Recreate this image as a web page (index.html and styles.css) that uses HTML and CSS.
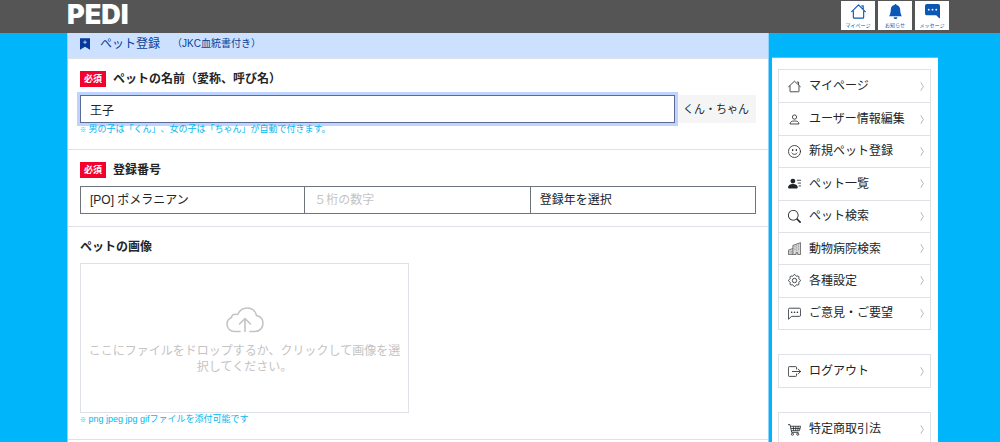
FILE: index.html
```html
<!DOCTYPE html>
<html lang="ja">
<head>
<meta charset="utf-8">
<meta name="viewport" content="width=device-width, initial-scale=1">
<title>PEDI ペット登録</title>
<link rel="stylesheet" href="styles.css">
</head>
<body>
<header class="topbar">
  <a class="logo" href="#">PEDI</a>
  <nav class="shortcuts">
    <a class="shortcut" href="#"><svg class="shortcut-icon" viewBox="0 0 16 16"><path d="M2.500 7.500V14a1 1 0 0 0 1 1h9a1 1 0 0 0 1-1V7.500M.8 8.200 8 1l7.200 7.200M11.500 2h1.500V5.500" fill="none" stroke="currentColor" stroke-width="1.200" stroke-linecap="round" stroke-linejoin="round"/></svg><span>マイページ</span></a>
    <a class="shortcut" href="#"><svg class="shortcut-icon" viewBox="0 0 16 16"><path d="M8 16a2 2 0 0 0 2-2H6a2 2 0 0 0 2 2zm.995-14.901a1 1 0 1 0-1.990 0A5.002 5.002 0 0 0 3 6c0 1.098-.5 6-2 7h14c-1.500-1-2-5.902-2-7 0-2.420-1.720-4.440-4.005-4.901z"/></svg><span>お知らせ</span></a>
    <a class="shortcut" href="#"><svg class="shortcut-icon" viewBox="0 0 16 16"><path d="M16 2a2 2 0 0 0-2-2H2a2 2 0 0 0-2 2v8a2 2 0 0 0 2 2h9.586a1 1 0 0 1 .707.293l2.853 2.853a.5.5 0 0 0 .854-.353V2zM5 6a1 1 0 1 1-2 0 1 1 0 0 1 2 0zm4 0a1 1 0 1 1-2 0 1 1 0 0 1 2 0zm3 1a1 1 0 1 1 0-2 1 1 0 0 1 0 2z"/></svg><span>メッセージ</span></a>
  </nav>
</header>

<div class="page">
  <main class="content">
    <h1 class="page-title">
      <svg class="title-icon" viewBox="0 0 14 16"><path d="M0 0h14v16l-7-4-7 4z"/><path d="M7 3v5M4.500 5.500h5" stroke="#cce0ff" stroke-width="1.200"/></svg>
      <span>ペット登録</span>
      <small class="title-note">（JKC血統書付き）</small>
    </h1>
    <form>
      <section class="field">
        <div class="field-head"><span class="badge">必須</span><label class="field-label" for="pet-name">ペットの名前（愛称、呼び名）</label></div>
        <div class="name-row">
          <input class="control focused" id="pet-name" type="text" value="王子">
          <span class="addon">くん・ちゃん</span>
        </div>
        <p class="hint"><span class="mark">※</span> 男の子は「くん」、女の子は「ちゃん」が自動で付きます。</p>
      </section>

      <section class="field">
        <div class="field-head"><span class="badge">必須</span><label class="field-label" for="reg-number">登録番号</label></div>
        <div class="number-row">
          <select class="control" aria-label="犬種"><option>[PO] ポメラニアン</option></select>
          <input class="control" id="reg-number" type="text" placeholder="５桁の数字">
          <select class="control" aria-label="登録年"><option>登録年を選択</option></select>
        </div>
      </section>

      <section class="field">
        <div class="field-head"><label class="field-label" for="pet-image">ペットの画像</label></div>
        <label class="dropzone">
          <input class="file-input" id="pet-image" type="file" accept=".png,.jpeg,.jpg,.gif">
          <svg class="cloud" viewBox="0 0 38 26" fill="none" stroke="currentColor" stroke-width="1.600" stroke-linecap="round" stroke-linejoin="round"><path d="M14 24.500H8.500C4.500 24.500 1 21.500 1 17.300 1 13.800 3 11.500 5.500 10.500 5.500 8 8 6.600 11.500 7.500 13.500 3.500 17 1 21 1c5 0 8.500 3.200 9.500 7.500 4 .8 6.500 4 6.500 8 0 4.500-3.500 8-8 8h-5M19 24.500v-13M13.500 17 19 11.500l5.500 5.500"/></svg>
          <span>ここにファイルをドロップするか、クリックして画像を選択してください。</span>
        </label>
        <p class="hint"><span class="mark">※</span> png jpeg jpg gifファイルを添付可能です</p>
      </section>
    </form>
  </main>

  <aside class="sidebar">
    <nav class="menu menu-main">
      <a class="menu-item" href="#"><svg class="menu-icon" viewBox="0 0 16 16"><path d="M2.500 7.500V14a.5.5 0 0 0 .5.5h10a.5.5 0 0 0 .5-.5V7.500M.8 8.200 8 1.500l7.200 6.700M11.500 2.500h1.500V5.500" fill="none" stroke="currentColor" stroke-linecap="round" stroke-linejoin="round"/></svg><span>マイページ</span><svg class="chevron" viewBox="0 0 6 12"><path d="M1 1l3 5-3 5"/></svg></a>
      <a class="menu-item" href="#"><svg class="menu-icon" viewBox="0 0 16 16"><g fill="none" stroke="currentColor"><circle cx="8" cy="5" r="2.600"/><path d="M2.500 13.500c0-2.500 2-3.700 5.500-3.700s5.500 1.200 5.500 3.700z" stroke-linejoin="round"/></g></svg><span>ユーザー情報編集</span><svg class="chevron" viewBox="0 0 6 12"><path d="M1 1l3 5-3 5"/></svg></a>
      <a class="menu-item" href="#"><svg class="menu-icon" viewBox="0 0 16 16"><g fill="none" stroke="currentColor" stroke-linecap="round"><circle cx="8" cy="8" r="7.400"/><path d="M4.700 10a3.900 3.900 0 0 0 6.600 0"/></g><ellipse cx="5.800" cy="6.300" rx=".9" ry="1.300"/><ellipse cx="10.200" cy="6.300" rx=".9" ry="1.300"/></svg><span>新規ペット登録</span><svg class="chevron" viewBox="0 0 6 12"><path d="M1 1l3 5-3 5"/></svg></a>
      <a class="menu-item" href="#"><svg class="menu-icon" viewBox="0 0 16 16"><circle cx="6" cy="5" r="3"/><path d="M0 13c0-2.500 2-4.500 6-4.500s6 2 6 4.500c0 .7-.4 1-1 1H1c-.6 0-1-.3-1-1z"/><path d="M11 4h5M12 7.500h4M13 11h3" stroke="currentColor"/></svg><span>ペット一覧</span><svg class="chevron" viewBox="0 0 6 12"><path d="M1 1l3 5-3 5"/></svg></a>
      <a class="menu-item" href="#"><svg class="menu-icon" viewBox="0 0 16 16"><path d="M11.742 10.344a6.500 6.500 0 1 0-1.397 1.398l3.850 3.850a1 1 0 0 0 1.415-1.414l-3.868-3.834zM12 6.500a5.500 5.500 0 1 1-11 0 5.500 5.500 0 0 1 11 0z"/></svg><span>ペット検索</span><svg class="chevron" viewBox="0 0 6 12"><path d="M1 1l3 5-3 5"/></svg></a>
      <a class="menu-item" href="#"><svg class="menu-icon" viewBox="0 0 16 16"><path d="M.5 15.500V10l5.500-2V4.200L15.500.8v14.700h-3.500V13h-2v2.500zM6 8v7.500" fill="#ddd" stroke="#555" stroke-linejoin="round"/><path d="M2.500 11v3M4.200 11v3M8.500 5v6M10.700 4v7M13 3v8" stroke="#777" stroke-dasharray="1 1"/></svg><span>動物病院検索</span><svg class="chevron" viewBox="0 0 6 12"><path d="M1 1l3 5-3 5"/></svg></a>
      <a class="menu-item" href="#"><svg class="menu-icon" viewBox="0 0 16 16"><g fill="none" stroke="currentColor" stroke-linejoin="round"><circle cx="8" cy="8" r="2.700"/><path d="M6.600 1.800c.4-1.500 2.400-1.500 2.800 0 .3.900 1.100 1.200 1.900.8 1.400-.7 2.800.7 2.100 2.100-.4.800-.1 1.600.8 1.900 1.500.4 1.500 2.400 0 2.800-.9.300-1.200 1.100-.8 1.900.7 1.400-.7 2.800-2.100 2.100-.8-.4-1.600-.1-1.900.8-.4 1.500-2.400 1.500-2.800 0-.3-.9-1.100-1.200-1.900-.8-1.400.7-2.800-.7-2.100-2.100.4-.8.100-1.600-.8-1.900-1.500-.4-1.500-2.400 0-2.800.9-.3 1.200-1.100.8-1.900-.7-1.400.7-2.800 2.100-2.100.8.400 1.600.1 1.900-.8z"/></g></svg><span>各種設定</span><svg class="chevron" viewBox="0 0 6 12"><path d="M1 1l3 5-3 5"/></svg></a>
      <a class="menu-item" href="#"><svg class="menu-icon" viewBox="0 0 16 16"><path d="M2 1.500h12A1.500 1.500 0 0 1 15.500 3v7a1.500 1.500 0 0 1-1.500 1.500H4.500l-4 3.500V3A1.500 1.500 0 0 1 2 1.500z" fill="none" stroke="currentColor" stroke-linejoin="round"/><circle cx="4.500" cy="6.500" r="1"/><circle cx="8" cy="6.500" r="1"/><circle cx="11.500" cy="6.500" r="1"/></svg><span>ご意見・ご要望</span><svg class="chevron" viewBox="0 0 6 12"><path d="M1 1l3 5-3 5"/></svg></a>
    </nav>
    <nav class="menu">
      <a class="menu-item" href="#"><svg class="menu-icon" viewBox="0 0 16 16"><path d="M10.500 5V3A1 1 0 0 0 9.500 2h-8a1 1 0 0 0-1 1v10a1 1 0 0 0 1 1h8a1 1 0 0 0 1-1v-2M5.500 8h10M12.500 5l3 3-3 3" fill="none" stroke="currentColor" stroke-linecap="round" stroke-linejoin="round"/></svg><span>ログアウト</span><svg class="chevron" viewBox="0 0 6 12"><path d="M1 1l3 5-3 5"/></svg></a>
    </nav>
    <nav class="menu">
      <a class="menu-item" href="#"><svg class="menu-icon" viewBox="0 0 16 16"><g fill="none" stroke="currentColor" stroke-linejoin="round"><path d="M0 2h2.500l2 9.500H13M3 4h12.500L14 9.500H4M6.500 4l.5 5.500M9.500 4v5.500M12.500 4 12 9.500M3.500 6.700h11.500"/><circle cx="5.500" cy="13.800" r="1.300"/><circle cx="12" cy="13.800" r="1.300"/></g></svg><span>特定商取引法</span><svg class="chevron" viewBox="0 0 6 12"><path d="M1 1l3 5-3 5"/></svg></a>
    </nav>
  </aside>
</div>
</body>
</html>
```

FILE: styles.css
```css
* {
  box-sizing: border-box;
}

html {
  scrollbar-width: none;
}

body {
  display: flex;
  flex-direction: column;
  min-height: 100vh;
  margin: 0;
  background: #00b5fa;
  color: #212529;
  font-family: "Liberation Sans", "Noto Sans CJK JP", sans-serif;
  font-size: 12px;
  line-height: 16px;
  text-spacing-trim: space-all;
}

.topbar {
  display: flex;
  flex: none;
  justify-content: space-between;
  align-items: flex-start;
  height: 33px;
  padding: 0 51px 0 67px;
  background: #555;
}

.logo {
  color: #fff;
  font-family: Inter, sans-serif;
  font-size: 27px;
  font-weight: 900;
  line-height: 30px;
  text-decoration: none;
}

.shortcuts {
  display: flex;
  gap: 3px;
  padding-top: 1px;
}

.shortcut {
  display: flex;
  flex-direction: column;
  align-items: center;
  gap: 2px;
  width: 34px;
  height: 29px;
  padding-top: 3px;
  background: #fff;
  color: #0b57b5;
  font-size: 5px;
  line-height: 8px;
  text-decoration: none;
  white-space: nowrap;
}

.shortcut-icon {
  width: 15px;
  height: 15px;
  fill: currentColor;
}

.page {
  display: flex;
  flex: 1;
  gap: 3px;
  padding: 0 62px 0 67px;
}

.content {
  flex: 1;
  min-width: 0;
  background: #fff;
  border: solid #8fd3fb;
  border-width: 0 1px;
}

.page-title {
  display: flex;
  align-items: center;
  height: 26px;
  margin: 0;
  padding: 0 12px 4px;
  background: #cce0ff;
  border-bottom: 1px solid #dee2e6;
  color: #084298;
  font-size: 12px;
  font-weight: 400;
}

.title-icon {
  width: 10px;
  height: 12px;
  margin-right: 10px;
  fill: #083a9c;
}

.title-note {
  margin-left: 12px;
  font-size: 10px;
}

.field {
  padding: 12px;
  border-bottom: 1px solid #dee2e6;
}

.field-head {
  display: flex;
  align-items: center;
  gap: 7px;
  height: 16px;
  margin-bottom: 8px;
}

.badge {
  padding: 0 4px;
  background: #f5002d;
  color: #fff;
  font-size: 9px;
  font-weight: 700;
}

.field-label {
  font-weight: 700;
}

.control {
  width: 100%;
  min-width: 0;
  height: 28px;
  margin: 0;
  padding: 0 9px;
  appearance: none;
  background: #fff;
  border: 1px solid #6c757d;
  border-radius: 0;
  color: inherit;
  font: inherit;
}

.control::placeholder {
  color: #c4c4c4;
}

.focused {
  position: relative;
  border-color: #5b6b94;
  box-shadow: 0 0 0 3px #bfd3ff;
}

.name-row {
  display: flex;
}

.addon {
  flex: none;
  width: 81px;
  padding-left: 8px;
  background: #f5f5f5;
  font-size: 11px;
  line-height: 28px;
}

.number-row {
  display: grid;
  grid-template-columns: repeat(3, 1fr);
}

.number-row .control + .control {
  border-left: 0;
}

.hint {
  position: relative;
  margin: 0;
  color: #00b8f0;
  font-size: 9px;
  line-height: 13px;
}

.mark {
  font-size: 6px;
}

.dropzone {
  display: flex;
  flex-direction: column;
  align-items: center;
  justify-content: center;
  gap: 10px;
  width: 329px;
  max-width: 100%;
  height: 150px;
  padding: 14px 6px 8px;
  border: 1px solid #dee2e6;
  color: #c4c4c4;
  text-align: center;
}

.file-input {
  position: absolute;
  width: 1px;
  height: 1px;
  opacity: 0;
}

.cloud {
  width: 38px;
  height: 26px;
}

.sidebar {
  display: flex;
  flex: none;
  flex-direction: column;
  gap: 24px;
  width: 166px;
  margin-top: 24px;
  padding: 11px 7px 12px 6px;
  background: #fff;
  border-top: 1px solid #4cc8fb;
}

.menu {
  display: grid;
  grid-auto-rows: 1fr;
  flex: none;
  min-height: 34px;
  border: 1px solid #dee2e6;
}

.menu-main {
  min-height: 261px;
}

.menu-item {
  display: flex;
  align-items: center;
  gap: 8px;
  padding: 0 5px 0 9px;
  color: inherit;
  text-decoration: none;
}

.menu-item + .menu-item {
  border-top: 1px solid #dee2e6;
}

.menu-icon {
  flex: none;
  width: 13px;
  height: 13px;
  fill: currentColor;
}

.chevron {
  width: 5px;
  height: 11px;
  margin-left: auto;
  fill: none;
  stroke: #aaa;
}
```
